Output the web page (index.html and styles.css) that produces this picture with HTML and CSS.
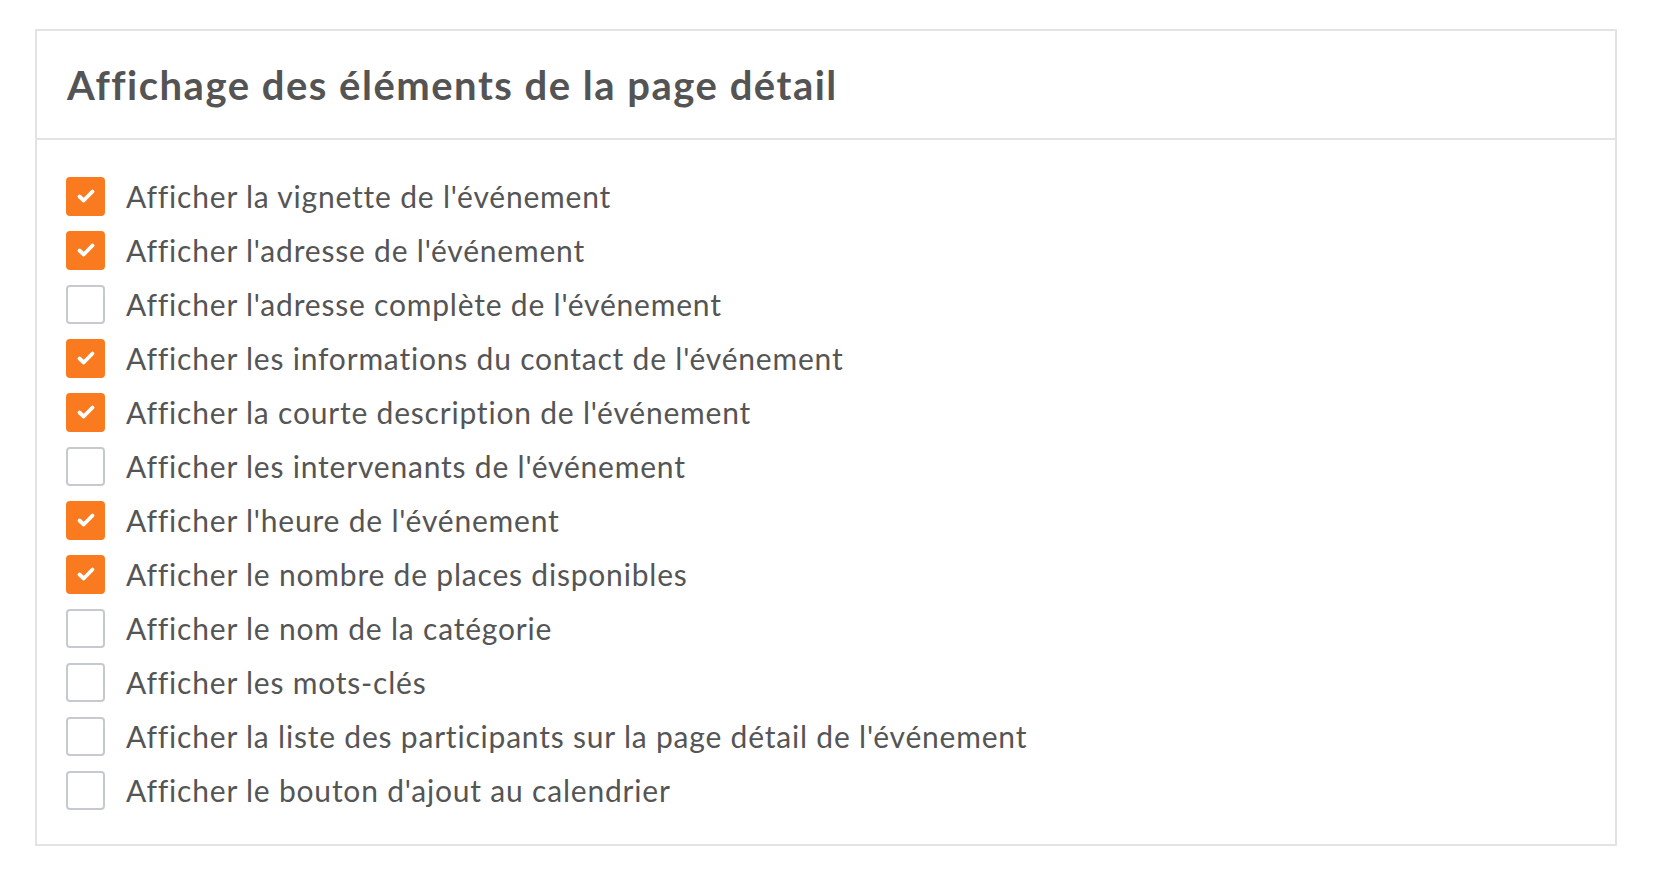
FILE: index.html
```
<!DOCTYPE html>
<html>
	<head>
		<meta charset="utf-8">
		<meta name="viewport" content="width=device-width, initial-scale=1">
		<link rel="stylesheet" href="styles.css">
	</head>
	<body>
		<div class="page">
			<div class="panel">
				<div class="panel-header">
					<h2 class="panel-title">Affichage des éléments de la page détail</h2>
				</div>
				<div class="panel-body">
					<label class="option"><span class="box checked"></span><span class="option-label">Afficher la vignette de l'événement</span></label>
					<label class="option"><span class="box checked"></span><span class="option-label">Afficher l'adresse de l'événement</span></label>
					<label class="option"><span class="box"></span><span class="option-label">Afficher l'adresse complète de l'événement</span></label>
					<label class="option"><span class="box checked"></span><span class="option-label">Afficher les informations du contact de l'événement</span></label>
					<label class="option"><span class="box checked"></span><span class="option-label">Afficher la courte description de l'événement</span></label>
					<label class="option"><span class="box"></span><span class="option-label">Afficher les intervenants de l'événement</span></label>
					<label class="option"><span class="box checked"></span><span class="option-label">Afficher l'heure de l'événement</span></label>
					<label class="option"><span class="box checked"></span><span class="option-label">Afficher le nombre de places disponibles</span></label>
					<label class="option"><span class="box"></span><span class="option-label">Afficher le nom de la catégorie</span></label>
					<label class="option"><span class="box"></span><span class="option-label">Afficher les mots-clés</span></label>
					<label class="option"><span class="box"></span><span class="option-label">Afficher la liste des participants sur la page détail de l'événement</span></label>
					<label class="option"><span class="box"></span><span class="option-label">Afficher le bouton d'ajout au calendrier</span></label>
				</div>
			</div>
		</div>
		<script>
			// check icon injected in every checked box
			var tick = '<svg viewBox="0 0 24 24" width="24" height="24"><path d="M5.5 12.5l4.2 4 8.8-9" fill="none" stroke="#fff" stroke-width="3.8" stroke-linecap="round" stroke-linejoin="round"/></svg>';
			document.querySelectorAll(".box.checked").forEach(function(el){
				el.innerHTML = tick;
			});
		</script>
	</body>
</html>
```

FILE: styles.css
```
html{
	font-family: 'Lato', sans-serif;
	color: #555555;
}
body{
	margin: 0;
	background-color: #ffffff;
}
.page{
	padding: 29px 37px 0 35px;
}
.panel{
	border: 2px solid #e3e3e3;
	display: flex;
	flex-direction: column;
}
.panel-header{
	height: 107px;
	display: flex;
	align-items: center;
	padding-left: 30px;
	border-bottom: 2px solid #e3e3e3;
}
.panel-title{
	margin: 0;
	font-size: 40px;
	font-weight: 700;
	letter-spacing: 1.5px;
	color: #545454;
}
.panel-body{
	display: flex;
	flex-direction: column;
	padding: 29px 29px 27px 29px;
}
.option{
	display: flex;
	align-items: center;
	height: 54px;
}
.box{
	width: 39px;
	height: 39px;
	box-sizing: border-box;
	border: 2px solid #c6cad0;
	border-radius: 4px;
	display: flex;
	align-items: center;
	justify-content: center;
	flex-shrink: 0;
}
.box.checked{
	background-color: #fa7a1f;
	border-color: #fa7a1f;
}
.option-label{
	margin-left: 21px;
	font-size: 30px;
	letter-spacing: 0.8px;
	color: #555555;
}
```
